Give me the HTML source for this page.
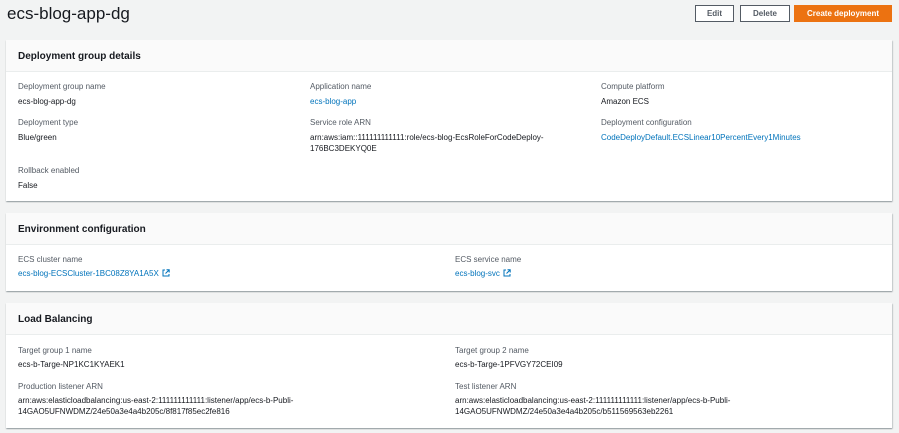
<!DOCTYPE html>
<html><head><style>
*{margin:0;padding:0;box-sizing:border-box}
body{width:899px;height:433px;background:#f2f3f3;font-family:"Liberation Sans",Arial,sans-serif;color:#16191f;position:relative;overflow:hidden}
.a{position:absolute;white-space:nowrap}
h1{position:absolute;left:7px;top:4px;font-size:17px;font-weight:normal;color:#16191f}
.btn{position:absolute;top:5px;height:17px;border:1px solid #545b64;background:#fff;font-size:8px;font-weight:bold;color:#545b64;text-align:center;line-height:15px}
.card{position:absolute;left:6px;width:886px;background:#fff;box-shadow:0 1px 1px rgba(0,28,36,.3),1px 1px 1px rgba(0,28,36,.15)}
.hd{height:32px;background:#fafafa;border-bottom:1px solid #eaeded;font-size:10px;font-weight:bold;padding:11px 0 0 12px}
.l{font-size:8px;color:#545b64}
.v{font-size:8px;color:#16191f;line-height:11px}
.k{color:#0073bb}
svg{vertical-align:-1px;margin-left:3px}
</style></head><body>
<h1>ecs-blog-app-dg</h1>
<div class="btn" style="left:695px;width:39px">Edit</div>
<div class="btn" style="left:740px;width:50px">Delete</div>
<div class="btn" style="left:794px;width:98px;background:#ec7211;border-color:#ec7211;color:#fff">Create deployment</div>

<div class="card" style="top:40px;height:161px"><div class="hd">Deployment group details</div></div>
<div class="a l" style="left:18px;top:82px">Deployment group name</div>
<div class="a v" style="left:18px;top:96px">ecs-blog-app-dg</div>
<div class="a l" style="left:18px;top:118px">Deployment type</div>
<div class="a v" style="left:18px;top:132px">Blue/green</div>
<div class="a l" style="left:18px;top:166px">Rollback enabled</div>
<div class="a v" style="left:18px;top:180px">False</div>
<div class="a l" style="left:310px;top:82px">Application name</div>
<div class="a v k" style="left:310px;top:96px">ecs-blog-app</div>
<div class="a l" style="left:310px;top:118px">Service role ARN</div>
<div class="a v" style="left:310px;top:132px">arn:aws:iam::111111111111:role/ecs-blog-EcsRoleForCodeDeploy-<br>176BC3DEKYQ0E</div>
<div class="a l" style="left:601px;top:82px">Compute platform</div>
<div class="a v" style="left:601px;top:96px">Amazon ECS</div>
<div class="a l" style="left:601px;top:118px">Deployment configuration</div>
<div class="a v k" style="left:601px;top:132px">CodeDeployDefault.ECSLinear10PercentEvery1Minutes</div>

<div class="card" style="top:213px;height:78px"><div class="hd">Environment configuration</div></div>
<div class="a l" style="left:18px;top:255px">ECS cluster name</div>
<div class="a v k" style="left:18px;top:268px">ecs-blog-ECSCluster-1BC08Z8YA1A5X<svg width="8" height="8" viewBox="0 0 8 8" fill="none" stroke="#0073bb" stroke-width="1"><path d="M3 1H1v6h6V5M4.5 .8H7.2V3.5M7 1L3.5 4.5"/></svg></div>
<div class="a l" style="left:455px;top:255px">ECS service name</div>
<div class="a v k" style="left:455px;top:268px">ecs-blog-svc<svg width="8" height="8" viewBox="0 0 8 8" fill="none" stroke="#0073bb" stroke-width="1"><path d="M3 1H1v6h6V5M4.5 .8H7.2V3.5M7 1L3.5 4.5"/></svg></div>

<div class="card" style="top:303px;height:125px"><div class="hd">Load Balancing</div></div>
<div class="a l" style="left:18px;top:346px">Target group 1 name</div>
<div class="a v" style="left:18px;top:359px">ecs-b-Targe-NP1KC1KYAEK1</div>
<div class="a l" style="left:18px;top:382px">Production listener ARN</div>
<div class="a v" style="left:18px;top:395px">arn:aws:elasticloadbalancing:us-east-2:111111111111:listener/app/ecs-b-Publi-<br>14GAO5UFNWDMZ/24e50a3e4a4b205c/8f817f85ec2fe816</div>
<div class="a l" style="left:455px;top:346px">Target group 2 name</div>
<div class="a v" style="left:455px;top:359px">ecs-b-Targe-1PFVGY72CEI09</div>
<div class="a l" style="left:455px;top:382px">Test listener ARN</div>
<div class="a v" style="left:455px;top:395px">arn:aws:elasticloadbalancing:us-east-2:111111111111:listener/app/ecs-b-Publi-<br>14GAO5UFNWDMZ/24e50a3e4a4b205c/b511569563eb2261</div>
</body></html>
